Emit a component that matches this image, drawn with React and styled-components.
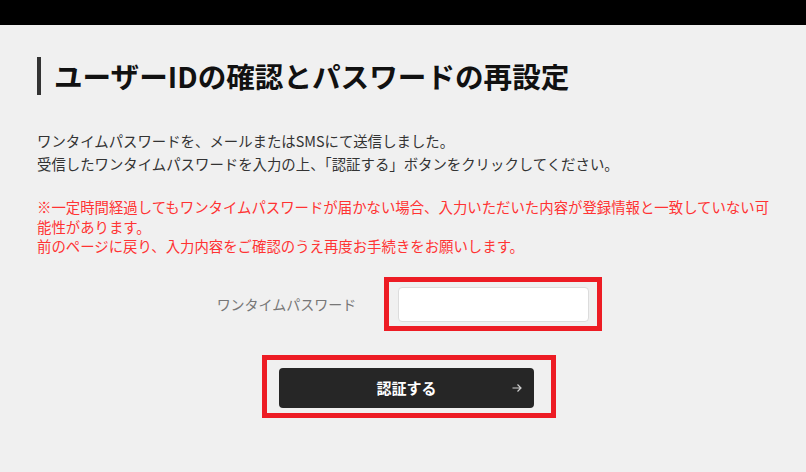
import React from "react";
import styled, { createGlobalStyle } from "styled-components";

const GlobalStyle = createGlobalStyle`
  html, body {
    margin: 0;
    padding: 0;
    background: #f0f0f0;
  }
  body {
    font-family: "Noto Sans CJK JP", "Noto Sans", sans-serif;
    color: #333;
  }
`;

const TopBar = styled.div`
  height: 25px;
  background: #000;
`;

const Main = styled.main`
  padding: 32px 30px 54px 37px;
`;

const Title = styled.h1`
  margin: 0;
  font-size: 28.6px;
  font-weight: 700;
  line-height: 38px;
  color: #111;
  border-left: 4px solid #333;
  padding-left: 13px;
`;

const Lead = styled.p`
  margin: 34px 0 0;
  font-size: 14.4px;
  line-height: 23px;
  color: #333;
`;

const Notice = styled.p`
  margin: 22px 0 0;
  font-size: 14.4px;
  line-height: 19.6px;
  color: #ff3333;
`;

const FormRow = styled.div`
  margin-top: 31px;
  display: flex;
  justify-content: center;
  align-items: center;
  gap: 42px;
  padding-right: 7px;
`;

const Label = styled.label`
  font-size: 14px;
  color: #777;
  line-height: 20px;
`;

const Highlight = styled.div`
  position: relative;
  display: flex;
  &::after {
    content: "";
    position: absolute;
    top: ${(p) => -p.$t}px;
    right: ${(p) => -p.$r}px;
    bottom: ${(p) => -p.$b}px;
    left: ${(p) => -p.$l}px;
    border: 5px solid #ed1c24;
    pointer-events: none;
  }
`;

const Input = styled.input`
  box-sizing: border-box;
  width: 191px;
  height: 35px;
  border: 1px solid #dcdcdc;
  border-radius: 4px;
  background: #fff;
  outline: none;
  padding: 0 10px;
  font-size: 14px;
`;

const ButtonRow = styled.div`
  margin-top: 46px;
  display: flex;
  justify-content: center;
`;

const Button = styled.button`
  position: relative;
  box-sizing: border-box;
  width: 255px;
  height: 40px;
  border: none;
  border-radius: 4px;
  background: #262626;
  color: #fff;
  font-family: "Noto Sans CJK JP", "Noto Sans", sans-serif;
  font-size: 15px;
  font-weight: 700;
  cursor: pointer;
`;

const Arrow = styled.svg`
  position: absolute;
  right: 12px;
  top: 50%;
  transform: translateY(-50%);
`;

export default function App() {
  return (
    <>
      <GlobalStyle />
      <TopBar />
      <Main>
        <Title>ユーザーIDの確認とパスワードの再設定</Title>
        <Lead>
          ワンタイムパスワードを、メールまたはSMSにて送信しました。
          <br />
          受信したワンタイムパスワードを入力の上、「認証する」ボタンをクリックしてください。
        </Lead>
        <Notice>
          ※一定時間経過してもワンタイムパスワードが届かない場合、入力いただいた内容が登録情報と一致していない可能性があります。
          <br />
          前のページに戻り、入力内容をご確認のうえ再度お手続きをお願いします。
        </Notice>
        <FormRow>
          <Label htmlFor="otp">ワンタイムパスワード</Label>
          <Highlight $t={10} $r={13} $b={9} $l={14}>
            <Input id="otp" type="text" />
          </Highlight>
        </FormRow>
        <ButtonRow>
          <Highlight $t={13} $r={22} $b={10} $l={17}>
            <Button>
              認証する
              <Arrow width="10" height="10" viewBox="0 0 10 10" fill="none">
                <path
                  d="M0.5 5H9M5.5 1.5L9 5L5.5 8.5"
                  stroke="#cfcfcf"
                  strokeWidth="1.2"
                />
              </Arrow>
            </Button>
          </Highlight>
        </ButtonRow>
      </Main>
    </>
  );
}
